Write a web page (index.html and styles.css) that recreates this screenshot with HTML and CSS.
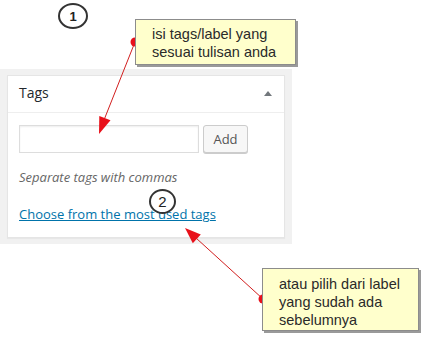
FILE: index.html
```html
<!DOCTYPE html>
<html>
<head>
    <meta charset="UTF-8">
    <title>Tags</title>
    <link rel="stylesheet" href="styles.css">
</head>
<body>
    <div class="page">
        <div class="panel">
            <div class="box">
                <div class="box-head">
                    <h3>Tags</h3>
                    <span class="toggle"></span>
                </div>
                <div class="box-body">
                    <div class="add-row">
                        <input type="text" class="tag-input">
                        <button type="button" class="add-btn">Add</button>
                    </div>
                    <p class="howto">Separate tags with commas</p>
                    <a href="#" class="cloud-link">Choose from the most used tags</a>
                </div>
            </div>
        </div>

        <svg class="arrows" width="429" height="342" viewBox="0 0 429 342">
            <line x1="135" y1="42" x2="104" y2="120" stroke="#d21f1f" stroke-width="1"/>
            <polygon points="99,134 110.5,120.3 99.3,115.9" fill="#e8101a"/>
            <circle cx="135" cy="42" r="4.5" fill="#e8101a"/>
            <line x1="263" y1="299" x2="196" y2="238" stroke="#d21f1f" stroke-width="1"/>
            <polygon points="185,228 192.8,243.2 200.8,234.4" fill="#e8101a"/>
            <circle cx="263" cy="299" r="4.5" fill="#e8101a"/>
        </svg>

        <div class="step step-one">1</div>
        <div class="step step-two">2</div>

        <div class="note note-one">isi tags/label yang<br>sesuai tulisan anda</div>
        <div class="note note-two">atau pilih dari label<br>yang sudah ada<br>sebelumnya</div>
    </div>
</body>
</html>
```

FILE: styles.css
```css
body {
    margin: 0;
    background-color: #fff;
    font-family: "Open Sans", sans-serif;
}
.page {
    position: relative;
    width: 429px;
    height: 342px;
    overflow: hidden;
}
.panel {
    margin-top: 69px;
    width: 278px;
    padding: 6px 7px 6px 7px;
    background-color: #f1f1f1;
}
.box {
    background-color: #fff;
    border: 1px solid #e5e5e5;
    box-shadow: 0 1px 1px rgba(0, 0, 0, 0.04);
    height: 161px;
}
.box-head {
    display: flex;
    justify-content: space-between;
    align-items: center;
    height: 36px;
    padding: 0 12px 0 11px;
    border-bottom: 1px solid #eee;
}
.box-head h3 {
    margin: 0;
    font-size: 14px;
    font-weight: 400;
    color: #23282d;
    position: relative;
    top: -2px;
}
.toggle {
    width: 0;
    height: 0;
    border-left: 4px solid transparent;
    border-right: 4px solid transparent;
    border-bottom: 5px solid #72777c;
    position: relative;
    top: -1px;
}
.box-body {
    padding: 12px 11px 0 11px;
}
.add-row {
    display: flex;
    gap: 4px;
}
.tag-input {
    box-sizing: border-box;
    width: 180px;
    height: 28px;
    margin: 0;
    border: 1px solid #ddd;
    box-shadow: inset 0 1px 2px rgba(0, 0, 0, 0.07);
}
.add-btn {
    box-sizing: border-box;
    width: 45px;
    height: 28px;
    margin: 0;
    padding: 0;
    font-family: "Open Sans", sans-serif;
    font-size: 13px;
    color: #555;
    background-color: #f7f7f7;
    border: 1px solid #ccc;
    border-radius: 3px;
    box-shadow: 0 1px 0 #ccc;
}
.howto {
    margin: 15px 0 0 0;
    font-size: 13px;
    font-style: italic;
    color: #666;
}
.cloud-link {
    display: inline-block;
    margin-top: 19px;
    font-size: 13px;
    color: #0073aa;
    text-decoration: underline;
}
.arrows {
    position: absolute;
    left: 0;
    top: 0;
}
.step {
    position: absolute;
    display: flex;
    align-items: center;
    justify-content: center;
    box-sizing: border-box;
    border: 2px solid #333;
    border-radius: 50%;
    font-family: Arial, "Liberation Sans", sans-serif;
    font-weight: bold;
    font-size: 13px;
    color: #222;
}
.step-one {
    left: 58px;
    top: 3px;
    width: 30px;
    height: 26px;
    background-color: #fff;
}
.step-two {
    left: 149px;
    top: 189px;
    width: 27px;
    height: 25px;
    background: transparent;
    font-weight: normal;
    font-size: 15px;
}
.note {
    position: absolute;
    box-sizing: border-box;
    background-color: #ffffcc;
    border: 1px solid #8c8c8c;
    box-shadow: 2px 2px 0 #9a9a9a;
    font-family: Arial, "Liberation Sans", sans-serif;
    font-size: 14.5px;
    line-height: 18px;
    color: #2a2a2a;
}
.note-one {
    left: 135px;
    top: 19px;
    width: 161px;
    height: 46px;
    padding: 5px 0 0 16px;
}
.note-two {
    left: 262px;
    top: 268px;
    width: 157px;
    height: 63px;
    padding: 6px 0 0 16px;
}
```
